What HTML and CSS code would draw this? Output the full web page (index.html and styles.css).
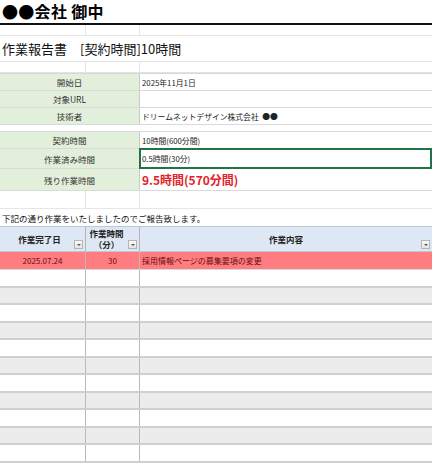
FILE: index.html
```html
<!DOCTYPE html>
<html lang="ja">
<head>
<meta charset="utf-8">
<link rel="stylesheet" href="styles.css">
</head>
<body>
<div class="sheet">
  <div class="title">●●会社 御中</div>
  <div class="row r-thin grid3"><div class="c"></div><div class="c"></div><div class="c last"></div></div>
  <div class="row r-head"><div class="heading">作業報告書　[契約時間]10時間</div></div>
  <div class="row r-thin grid3"><div class="c"></div><div class="c"></div><div class="c last"></div></div>

  <div class="row info first"><div class="lbl">開始日</div><div class="val">2025年11月1日</div></div>
  <div class="row info"><div class="lbl">対象URL</div><div class="val"></div></div>
  <div class="row info"><div class="lbl">技術者</div><div class="val">ドリームネットデザイン株式会社&nbsp;&nbsp;●●</div></div>
  <div class="row gap"></div>
  <div class="row info first"><div class="lbl">契約時間</div><div class="val">10時間(600分間)</div></div>
  <div class="row info sel"><div class="lbl">作業済み時間</div><div class="val selected">0.5時間(30分)</div></div>
  <div class="row info tall"><div class="lbl">残り作業時間</div><div class="val remain">9.5時間(570分間)</div></div>
  <div class="row r-blank grid3"><div class="c"></div><div class="c"></div><div class="c last"></div></div>
  <div class="row note">下記の通り作業をいたしましたのでご報告致します。</div>

  <div class="row thead grid3">
    <div class="th">作業完了日<span class="dd"></span></div>
    <div class="th two"><span class="thtext">作業時間<br>（分）</span><span class="dd"></span></div>
    <div class="th last">作業内容<span class="dd"></span></div>
  </div>
  <div class="row trow hl grid3">
    <div class="td center">2025.07.24</div>
    <div class="td center">30</div>
    <div class="td last">採用情報ページの募集要項の変更</div>
  </div>
  <div class="row trow h18 grid3"><div class="td"></div><div class="td"></div><div class="td last"></div></div>
  <div class="row trow h17 alt grid3"><div class="td"></div><div class="td"></div><div class="td last"></div></div>
  <div class="row trow h18 grid3"><div class="td"></div><div class="td"></div><div class="td last"></div></div>
  <div class="row trow h17 alt grid3"><div class="td"></div><div class="td"></div><div class="td last"></div></div>
  <div class="row trow h18 grid3"><div class="td"></div><div class="td"></div><div class="td last"></div></div>
  <div class="row trow h17 alt grid3"><div class="td"></div><div class="td"></div><div class="td last"></div></div>
  <div class="row trow h18 grid3"><div class="td"></div><div class="td"></div><div class="td last"></div></div>
  <div class="row trow h17 alt grid3"><div class="td"></div><div class="td"></div><div class="td last"></div></div>
  <div class="row trow h18 grid3"><div class="td"></div><div class="td"></div><div class="td last"></div></div>
  <div class="row trow h17 alt grid3"><div class="td"></div><div class="td"></div><div class="td last"></div></div>
  <div class="row trow h18 grid3"><div class="td"></div><div class="td"></div><div class="td last"></div></div>
</div>
</body>
</html>
```

FILE: styles.css
```css
* { box-sizing: border-box; margin: 0; padding: 0; }
html, body { background: #fff; }
body {
  width: 432px;
  height: 463px;
  overflow: hidden;
  font-family: "Noto Sans CJK JP", "Noto Sans", sans-serif;
  color: #222;
}
.sheet { display: flex; flex-direction: column; }
.title {
  height: 25px;
  border-bottom: 2px solid #111;
  font-size: 16px;
  font-weight: 700;
  line-height: 23px;
  padding-left: 2px;
  color: #000;
  letter-spacing: 0.3px;
}
.row { display: flex; }
.grid3 { display: grid; grid-template-columns: 86px 54px 1fr; }
.r-thin { height: 11px; border-bottom: 1px solid #e2e2e2; }
.r-thin .c, .r-blank .c { border-right: 1px solid #e6e6e6; }
.c.last { border-right: none; }
.r-head { height: 26px; border-bottom: 1px solid #e2e2e2; align-items: center; }
.heading { font-size: 13px; padding-left: 2px; color: #111; }

.info { height: 17px; border-bottom: 1px solid #d9d9d9; }
.info.first { height: 18px; border-top: 1px solid #d9d9d9; }
.info.tall { height: 22px; }
.info.sel { height: 20px; }
.lbl {
  width: 140px;
  background: #e2efda;
  border-right: 1px solid #c9c9c9;
  font-size: 8.5px;
  display: flex;
  align-items: center;
  justify-content: center;
  color: #333;
}
.val {
  flex: 1;
  font-size: 7.8px;
  display: flex;
  align-items: center;
  padding-left: 2px;
  color: #222;
}
.val.selected { border: 2px solid #217346; margin: -1px 0 -1px -1px; padding-left: 1px; }
.val.remain { font-size: 12px; font-weight: 700; color: #e3222a; }
.gap { height: 6px; }
.r-blank { height: 18px; border-bottom: 1px solid #e6e6e6; }
.note { height: 17px; font-size: 8.5px; align-items: center; padding-left: 2px; color: #111; }

.thead { height: 26px; background: #dde8f4; border-top: 1px solid #b9c9dc; border-bottom: 1px solid #c0c8d4; }
.th {
  position: relative;
  font-size: 8.5px;
  font-weight: 700;
  display: flex;
  align-items: center;
  justify-content: center;
  text-align: center;
  line-height: 11px;
  border-right: 1px solid #b4b4b4;
  color: #222;
}
.th.last { border-right: none; }
.th.two { padding-right: 12px; }
.th:first-child { padding-right: 6px; }
.thtext { display: block; }
.dd {
  position: absolute;
  right: 2px;
  bottom: 2px;
  width: 9px;
  height: 9px;
  background: linear-gradient(#fbfbfb, #e3e3e3);
  border: 1px solid #b5b5b5;
}
.dd::after {
  content: "";
  position: absolute;
  left: 2px;
  top: 3px;
  border-left: 2px solid transparent;
  border-right: 2px solid transparent;
  border-top: 2px solid #555;
}
.trow { border-bottom: 2px solid #cfcfcf; }
.hl { height: 18px; background: #ff7c80; border-bottom: 1px solid #d9d9d9; }
.h18 { height: 18px; }
.h17 { height: 17px; }
.alt { background: #ececec; }
.td {
  border-right: 1px solid #b9b9b9;
  font-size: 8px;
  display: flex;
  align-items: center;
  padding-left: 2px;
  color: #6b0d0d;
}
.td.center { justify-content: center; padding-left: 0; }
.td.last { border-right: none; }
```
